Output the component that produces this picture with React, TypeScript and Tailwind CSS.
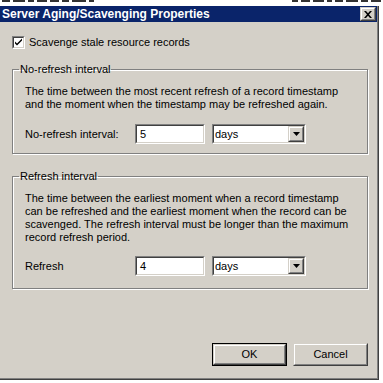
import React from 'react';

const FONT = "font-['Liberation_Sans',Arial,sans-serif]";

const Sunken: React.FC<{ className?: string; children?: React.ReactNode }> = ({ className = '', children }) => (
  <div className={`border border-t-[#808080] border-l-[#808080] border-b-white border-r-white ${className}`}>
    <div className="h-full w-full border border-t-[#404040] border-l-[#404040] border-b-[#d4d0c8] border-r-[#d4d0c8] bg-white">
      {children}
    </div>
  </div>
);

const Raised: React.FC<{ className?: string; children?: React.ReactNode }> = ({ className = '', children }) => (
  <div className={`border border-t-[#d4d0c8] border-l-[#d4d0c8] border-b-[#404040] border-r-[#404040] ${className}`}>
    <div className="flex h-full w-full items-center justify-center border border-t-white border-l-white border-b-[#808080] border-r-[#808080] bg-[#d4d0c8]">
      {children}
    </div>
  </div>
);

const IntervalRow: React.FC<{ label: string; value: string }> = ({ label, value }) => (
  <div className="flex items-center">
    <span className="w-[110px]">{label}</span>
    <Sunken className="h-[20px] w-[70px]">
      <div className="pl-[3px] leading-[16px]">{value}</div>
    </Sunken>
    <Sunken className="ml-[7px] h-[20px] w-[94px]">
      <div className="flex h-full items-center justify-between">
        <span className="pl-[1px] leading-[16px]">days</span>
        <Raised className="h-[16px] w-[16px]">
          <svg width="7" height="4" viewBox="0 0 7 4">
            <path d="M0 0h7L3.5 4z" fill="#000" />
          </svg>
        </Raised>
      </div>
    </Sunken>
  </div>
);

const GroupBox: React.FC<{ title: string; children: React.ReactNode; className?: string }> = ({ title, children, className = '' }) => (
  <fieldset className={`ml-[12px] w-[356px] border border-[#808080] px-[12px] shadow-[inset_1px_1px_0_#fff,1px_1px_0_#fff] ${className}`}>
    <legend className="-ml-[6px] px-[1px] leading-[13px]">{title}</legend>
    {children}
  </fieldset>
);

// cut-off bits of the window lying behind the dialog
const Specks: React.FC<{ widths: number[] }> = ({ widths }) => (
  <div className="flex items-start gap-[3px]">
    {widths.map((w, i) => (
      <div key={i} className="h-[2px] bg-[#333]" style={{ width: w }} />
    ))}
  </div>
);

export default function App() {
  return (
    <div className={`h-[383px] w-[383px] overflow-hidden bg-white text-[11px] text-black ${FONT}`}>
      <div className="flex h-[6px] justify-between px-[2px]">
        <Specks widths={[8, 12, 6, 10, 9, 7, 14, 5]} />
        <Specks widths={[6, 9, 11, 5, 8, 12, 7, 10]} />
      </div>

      <div className="flex h-[374px] w-[379px] flex-col border-r border-b border-r-[#404040] border-b-[#404040]">
        <div className="flex h-full flex-col border-r border-b border-r-[#808080] border-b-[#808080]">
          {/* title bar */}
          <div className="flex h-[16px] items-center justify-between bg-[#0a246a] pl-[2px] pr-[1px]">
            <span className="text-[12px] font-bold leading-[16px] text-white">Server Aging/Scavenging Properties</span>
            <Raised className="h-[14px] w-[16px]">
              <svg width="8" height="7" viewBox="0 0 8 7">
                <path d="M0 0h2l2 2.2L6 0h2L5 3.5 8 7H6L4 4.8 2 7H0l3-3.5z" fill="#000" />
              </svg>
            </Raised>
          </div>

          {/* body */}
          <div className="flex flex-1 flex-col bg-[#d4d0c8] pt-[14px]">
            <label className="ml-[12px] flex items-center gap-[4px]">
              <Sunken className="h-[13px] w-[13px]">
                <svg width="11" height="11" viewBox="0 0 11 11" className="-ml-px -mt-px">
                  <path d="M2 4.5l2 2 5-5v2l-5 5-2-2z" fill="#000" />
                </svg>
              </Sunken>
              <span className="leading-[13px]">Scavenge stale resource records</span>
            </label>

            <GroupBox title="No-refresh interval" className="mt-[14px] pb-[9px]">
              <p className="mt-[9px] leading-[13px]">
                The time between the most recent refresh of a record timestamp
                <br />
                and the moment when the timestamp may be refreshed again.
              </p>
              <div className="mt-[13px]">
                <IntervalRow label="No-refresh interval:" value="5" />
              </div>
            </GroupBox>

            <GroupBox title="Refresh interval" className="mt-[16px] pb-[12px]">
              <p className="mt-[9px] leading-[13px]">
                The time between the earliest moment when a record timestamp
                <br />
                can be refreshed and the earliest moment when the record can be
                <br />
                scavenged. The refresh interval must be longer than the maximum
                <br />
                record refresh period.
              </p>
              <div className="mt-[12px]">
                <IntervalRow label="Refresh" value="4" />
              </div>
            </GroupBox>

            <div className="mt-auto mb-[12px] flex justify-end gap-[6px] pr-[9px]">
              <div className="h-[23px] w-[75px] border border-black">
                <Raised className="h-full w-full">OK</Raised>
              </div>
              <Raised className="h-[23px] w-[75px]">Cancel</Raised>
            </div>
          </div>
        </div>
      </div>
    </div>
  );
}
